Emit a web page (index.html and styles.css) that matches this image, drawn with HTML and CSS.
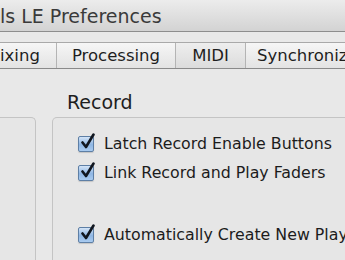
FILE: index.html
```html
<!DOCTYPE html>
<html>
<head>
<meta charset="utf-8">
<link rel="stylesheet" href="styles.css">
</head>
<body>
<div class="window">
  <div class="titlebar">ls LE Preferences</div>
  <div class="toolbar"></div>
  <div class="tabs">
    <div class="tab tab-first">ixing</div>
    <div class="tab tab-proc">Processing</div>
    <div class="tab tab-midi">MIDI</div>
    <div class="tab tab-sync">Synchroniz</div>
  </div>
  <div class="content">
    <div class="leftbox"></div>
    <div class="section">
      <div class="heading">Record</div>
      <div class="box">
        <div class="row">
          <span class="check"><svg viewBox="0 0 18 18" width="18" height="18"><path d="M4.5 9.5 L8 14 L15.5 1.5" /></svg></span>
          <span class="label">Latch Record Enable Buttons</span>
        </div>
        <div class="row">
          <span class="check"><svg viewBox="0 0 18 18" width="18" height="18"><path d="M4.5 9.5 L8 14 L15.5 1.5" /></svg></span>
          <span class="label">Link Record and Play Faders</span>
        </div>
        <div class="row row-spaced">
          <span class="check"><svg viewBox="0 0 18 18" width="18" height="18"><path d="M4.5 9.5 L8 14 L15.5 1.5" /></svg></span>
          <span class="label">Automatically Create New Playlists When Loop Recording</span>
        </div>
      </div>
    </div>
  </div>
</div>
</body>
</html>
```
FILE: styles.css
```css
html, body {
  margin: 0;
  padding: 0;
}
body {
  width: 345px;
  height: 260px;
  overflow: hidden;
  background: #e8e8e8;
  font-family: "DejaVu Sans", "Liberation Sans", sans-serif;
  color: #1a1a1a;
}
.window {
  width: 345px;
  height: 260px;
  overflow: hidden;
  display: flex;
  flex-direction: column;
}
.titlebar {
  height: 32px;
  flex: none;
  box-sizing: border-box;
  border-bottom: 1px solid #8e8e8e;
  background: linear-gradient(#ececec, #d3d3d3);
  font-size: 19px;
  line-height: 32px;
  color: #3a3a3a;
  white-space: nowrap;
}
.toolbar {
  height: 10px;
  flex: none;
  background: #e9e9e9;
}
.tabs {
  flex: none;
  height: 27px;
  box-sizing: border-box;
  display: flex;
  border-top: 1px solid #a9a9a9;
  border-bottom: 1px solid #8a8a8a;
  background: linear-gradient(#f6f6f6, #e3e3e3);
  font-size: 16.5px;
  line-height: 25px;
  white-space: nowrap;
}
.tab {
  flex: none;
  box-sizing: border-box;
  border-right: 1px solid #b4b4b4;
  text-align: center;
  color: #1e1e1e;
  overflow: hidden;
}
.tab-first { width: 57px; text-align: left; }
.tab-proc { width: 119px; }
.tab-midi { width: 70px; background: linear-gradient(#eeeeee, #dcdcdc); }
.tab-sync { flex: 1; border-right: none; text-align: left; padding-left: 11px; }
.content {
  flex: 1;
  display: flex;
  padding-top: 48px;
  background: #e8e8e8;
}
.leftbox {
  width: 36px;
  flex: none;
  box-sizing: border-box;
  border: 1px solid #c4c4c4;
  border-left: none;
  border-bottom: none;
  border-top-right-radius: 5px;
  background: #e6e6e6;
}
.section {
  margin-left: 16px;
  margin-top: -26px;
  flex: none;
  width: 460px;
  display: flex;
  flex-direction: column;
}
.heading {
  font-size: 19px;
  line-height: 22px;
  padding-left: 15px;
  height: 26px;
  color: #1e1e1e;
}
.box {
  flex: 1;
  box-sizing: border-box;
  border: 1px solid #c4c4c4;
  border-bottom: none;
  border-top-left-radius: 5px;
  background: #e6e6e6;
  padding-top: 11px;
  padding-left: 25px;
}
.row {
  display: flex;
  align-items: center;
  height: 29px;
  white-space: nowrap;
}
.row-spaced {
  margin-top: 33px;
}
.check {
  position: relative;
  width: 16px;
  height: 16px;
  flex: none;
  box-sizing: border-box;
  border: 1px solid #5e7fa5;
  border-radius: 2px;
  background: linear-gradient(#d3e4f7, #8fb6e3 55%, #a9cbf0);
  box-shadow: 0 1px 1px rgba(0,0,0,0.15);
}
.check svg {
  position: absolute;
  left: -1px;
  top: -4px;
  fill: none;
  stroke: #10161f;
  stroke-width: 2.6;
  stroke-linecap: round;
  stroke-linejoin: round;
}
.label {
  margin-left: 10px;
  font-size: 15.8px;
  color: #1c1c1c;
}
```
